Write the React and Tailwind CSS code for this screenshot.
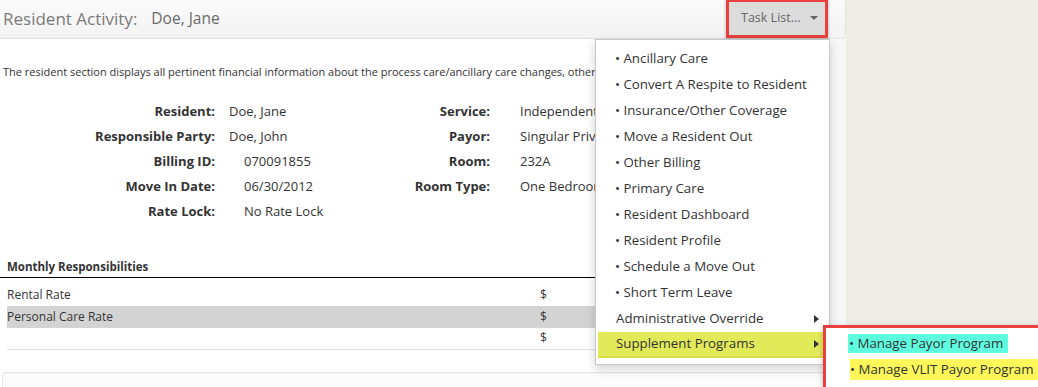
import React from 'react';

const fields = [
  { label: 'Resident:', value: 'Doe, Jane', pad: 'pl-[14px]', label2: 'Service:', value2: 'Independent Living' },
  { label: 'Responsible Party:', value: 'Doe, John', pad: 'pl-[14px]', label2: 'Payor:', value2: 'Singular Private Pay' },
  { label: 'Billing ID:', value: '070091855', pad: 'pl-[29px]', label2: 'Room:', value2: '232A' },
  { label: 'Move In Date:', value: '06/30/2012', pad: 'pl-[29px]', label2: 'Room Type:', value2: 'One Bedroom' },
  { label: 'Rate Lock:', value: 'No Rate Lock', pad: 'pl-[29px]', label2: '', value2: '' },
];

const tasks = [
  'Ancillary Care',
  'Convert A Respite to Resident',
  'Insurance/Other Coverage',
  'Move a Resident Out',
  'Other Billing',
  'Primary Care',
  'Resident Dashboard',
  'Resident Profile',
  'Schedule a Move Out',
  'Short Term Leave',
];

function Caret() {
  return (
    <svg width="5" height="8" viewBox="0 0 5 8" className="fill-[#333]">
      <path d="M0 0 L5 4 L0 8 Z" />
    </svg>
  );
}

export default function App() {
  return (
    <div className="flex w-[1038px] h-[387px] overflow-hidden bg-[#f0ede7] font-['Open_Sans',sans-serif] text-[#333]">
      <div className="relative w-[846px] shrink-0 bg-[#f8f8f8]">
        {/* Header */}
        <div className="h-[39px] flex items-center bg-gradient-to-b from-[#fbfbfb] to-[#f3f3f3] border-b border-r border-[#e3e3e3] rounded-br-[4px] pl-[3px]">
          <span className="text-[17px] text-[#7a7a7a]">Resident Activity:</span>
          <span className="ml-[14px] text-[15.5px] text-[#6a6a6a]">Doe, Jane</span>
          <div className="ml-auto mr-[17px] relative h-[39px]">
            <div className="h-[39px] w-[102px] -mt-[1px] bg-[#dcdcdc] border-[3px] border-[#e8413f] shadow-[0_1px_3px_rgba(0,0,0,0.3)] flex items-center pl-[12px] gap-[9px] text-[12.5px] text-[#666]">
              <span>Task List...</span>
              <span className="w-0 h-0 border-l-[4px] border-r-[4px] border-t-[4px] border-l-transparent border-r-transparent border-t-[#666]" />
            </div>
          </div>
        </div>

        {/* Body */}
        <div className="w-[830px] h-[348px] bg-white border-r border-[#e0e0e0]">
          <p className="pt-[25px] pl-[3px] text-[11px] whitespace-nowrap overflow-hidden">
            The resident section displays all pertinent financial information about the process care/ancillary care changes, other billing and coverage for the resident.
          </p>

          <div className="mt-[18px] grid grid-cols-[215px_190px_85px_1fr] text-[13px]">
            {fields.map((f) => (
              <React.Fragment key={f.label}>
                <div className="h-[25px] leading-[25px] text-right font-bold">{f.label}</div>
                <div className={`h-[25px] leading-[25px] ${f.pad}`}>{f.value}</div>
                <div className="h-[25px] leading-[25px] text-right font-bold whitespace-nowrap">{f.label2}</div>
                <div className="h-[25px] leading-[25px] pl-[30px] whitespace-nowrap">{f.value2}</div>
              </React.Fragment>
            ))}
          </div>

          <div className="mt-[34px] w-[829px]">
            <div className="h-[20px] pl-[7px] border-b border-black text-[11.5px] font-bold leading-[18px]">Monthly Responsibilities</div>
            <div className="mt-[6px] ml-[7px] text-[12px]">
              <div className="h-[22px] flex items-center">
                <span className="w-[533px]">Rental Rate</span>
                <span>$</span>
              </div>
              <div className="h-[22px] flex items-center bg-[#d3d3d3]">
                <span className="w-[533px]">Personal Care Rate</span>
                <span>$</span>
              </div>
              <div className="h-[22px] flex items-center border-b border-[#e0e0e0]">
                <span className="w-[533px]"></span>
                <span>$</span>
              </div>
            </div>
          </div>

          <div className="mt-[22px] ml-[2px] h-[30px] border border-[#e2e2e2] rounded-[4px] bg-[#fcfcfc]" />
        </div>

        {/* Task list dropdown */}
        <div className="absolute left-[595px] top-[39px] w-[235px] bg-white border border-[#c8c8c8] shadow-[0_4px_10px_rgba(0,0,0,0.18)] pt-[6px] pb-[6px] text-[13.3px]">
          {tasks.map((t) => (
            <div key={t} className="h-[26px] flex items-center pl-[19px] whitespace-nowrap">
              {'\u2022 ' + t}
            </div>
          ))}
          <div className="h-[26px] flex items-center pl-[20px] pr-[10px] justify-between">
            <span>Administrative Override</span>
            <Caret />
          </div>
          <div className="h-[26px] mx-[2px] flex items-center pl-[18px] pr-[8px] justify-between bg-[#e3ea5a] border-b-[2px] border-[#d9e04a]">
            <span>Supplement Programs</span>
            <Caret />
          </div>
        </div>

        {/* Submenu */}
        <div className="absolute left-[823px] top-[325px] w-[230px] h-[70px] bg-white border-[3px] border-[#e8413f] shadow-[0_2px_6px_rgba(0,0,0,0.25)] pt-[6px] text-[13.3px] z-10">
          <div className="h-[25px] flex items-start">
            <div className="ml-[22px] h-[19px] w-[160px] bg-[#5ffde0] flex items-center pl-[1px] whitespace-nowrap">
              {'\u2022 Manage Payor Program'}
            </div>
          </div>
          <div className="h-[21px] ml-[24px] w-[190px] bg-[#fdf75a] flex items-center whitespace-nowrap">
            {'\u2022 Manage VLIT Payor Program'}
          </div>
        </div>
      </div>
      <div className="flex-1" />
    </div>
  );
}
